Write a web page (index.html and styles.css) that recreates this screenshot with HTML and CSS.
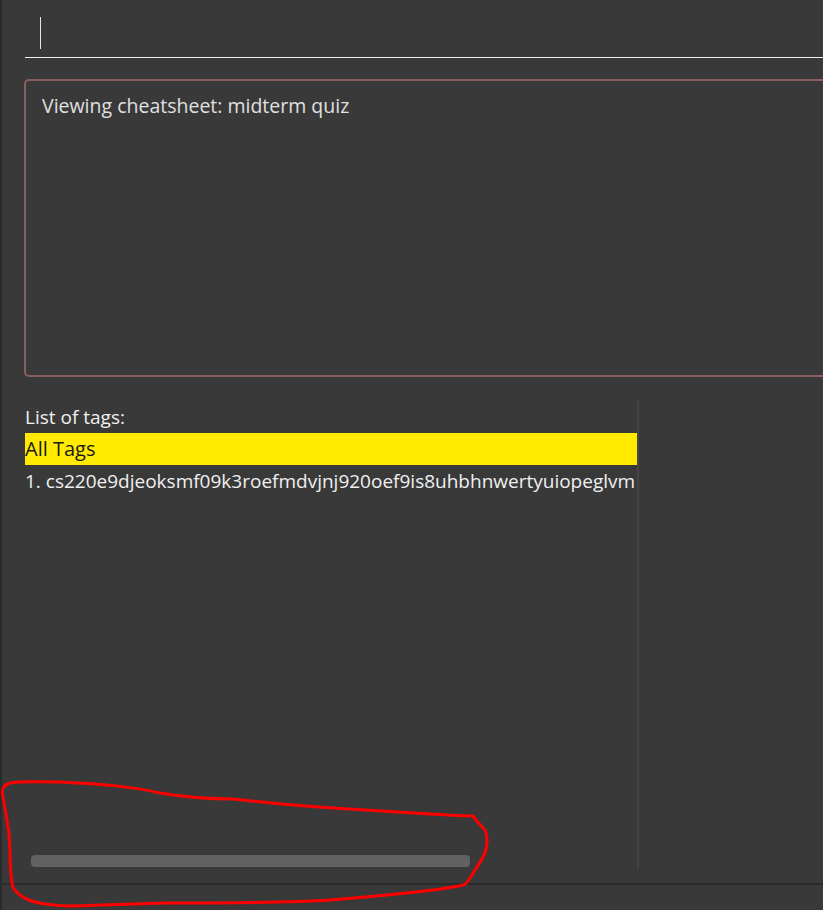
FILE: index.html
```html
<!DOCTYPE html>
<html>
<head>
<meta charset="utf-8">
<link rel="stylesheet" href="styles.css">
</head>
<body>
<div class="app">
  <div class="command"><span class="caret"></span></div>
  <div class="result">
    <div class="result-text">Viewing cheatsheet: midterm quiz</div>
  </div>
  <div class="main">
    <div class="tags">
      <div class="tags-title">List of tags:</div>
      <div class="tag-list">
        <div class="tag selected">All Tags</div>
        <div class="tag">1. cs220e9djeoksmf09k3roefmdvjnj920oef9is8uhbhnwertyuiopeglvm</div>
      </div>
      <div class="hscroll"><div class="thumb"></div></div>
    </div>
    <div class="detail"></div>
  </div>
  <div class="status"></div>
</div>
<svg class="annotation" width="823" height="910" viewBox="0 0 823 910">
  <path d="M3 797 C1 788 4 785 10 783 C20 781 33 782 60 782 C100 784 130 786 160 793 C190 798 210 799 233 799 C260 802 300 806 333 808 C370 810 400 812 430 814 C450 815 465 816 473 816 C476 820 480 825 485 830 C488 836 488 848 483 857 C480 863 475 870 470 878 C467 883 465 885 463 885 C450 888 440 889 433 890 C400 894 367 897 330 900 C300 902 230 903 167 903 C120 904 90 906 67 906 C45 905 30 902 23 897 C15 892 12 888 12 883 C10 870 10 860 10 850 C9 838 9 830 8 827 C6 812 4 803 3 797 Z" fill="none" stroke="#ff0000" stroke-width="3" stroke-linejoin="round"/>
</svg>
</body>
</html>
```

FILE: styles.css
```css
html, body {
  margin: 0;
  padding: 0;
  width: 823px;
  height: 910px;
  overflow: hidden;
  background: #393939;
}

.app {
  position: relative;
  height: 910px;
  border-left: 2px solid #2b2b2b;
  box-sizing: border-box;
  font-family: "Open Sans", "Noto Sans", sans-serif;
  color: #e6e6e6;
  display: flex;
  flex-direction: column;
  overflow: hidden;
}

.command {
  margin-left: 23px;
  height: 57px;
  border-bottom: 1px solid #f0f0f0;
  display: flex;
  align-items: flex-start;
}

.caret {
  display: block;
  width: 1px;
  height: 32px;
  margin-top: 17px;
  margin-left: 15px;
  background: #e8e8e8;
}

.result {
  margin-top: 21px;
  margin-left: 22px;
  margin-right: -10px;
  height: 298px;
  box-sizing: border-box;
  border: 2px solid #85605f;
  border-radius: 5px;
  padding: 12px 16px;
}

.result-text {
  font-size: 19.5px;
  line-height: 26px;
  color: #e0e0e0;
}

.main {
  margin-top: 24px;
  display: flex;
  height: 467px;
}

.tags {
  margin-left: 23px;
  width: 612px;
  overflow: hidden;
  display: flex;
  flex-direction: column;
}

.tags-title {
  font-size: 19px;
  line-height: 32px;
  color: #f0f0f0;
  white-space: nowrap;
}

.tag-list {
  display: flex;
  flex-direction: column;
}

.tag {
  font-size: 19px;
  line-height: 32px;
  height: 32px;
  white-space: nowrap;
  color: #f0f0f0;
}

.tag.selected {
  background: #ffea00;
  color: #1a1a1a;
  font-size: 20px;
}

.hscroll {
  margin-top: auto;
  padding: 0 0 1px 6px;
}

.thumb {
  width: 439px;
  height: 12px;
  border-radius: 4px;
  background: #616161;
}

.detail {
  width: 2px;
  background: #444444;
}

.status {
  margin-top: 15px;
  height: 2px;
  background: #2b2b2b;
}

.annotation {
  position: absolute;
  left: 0;
  top: 0;
  pointer-events: none;
}
```
